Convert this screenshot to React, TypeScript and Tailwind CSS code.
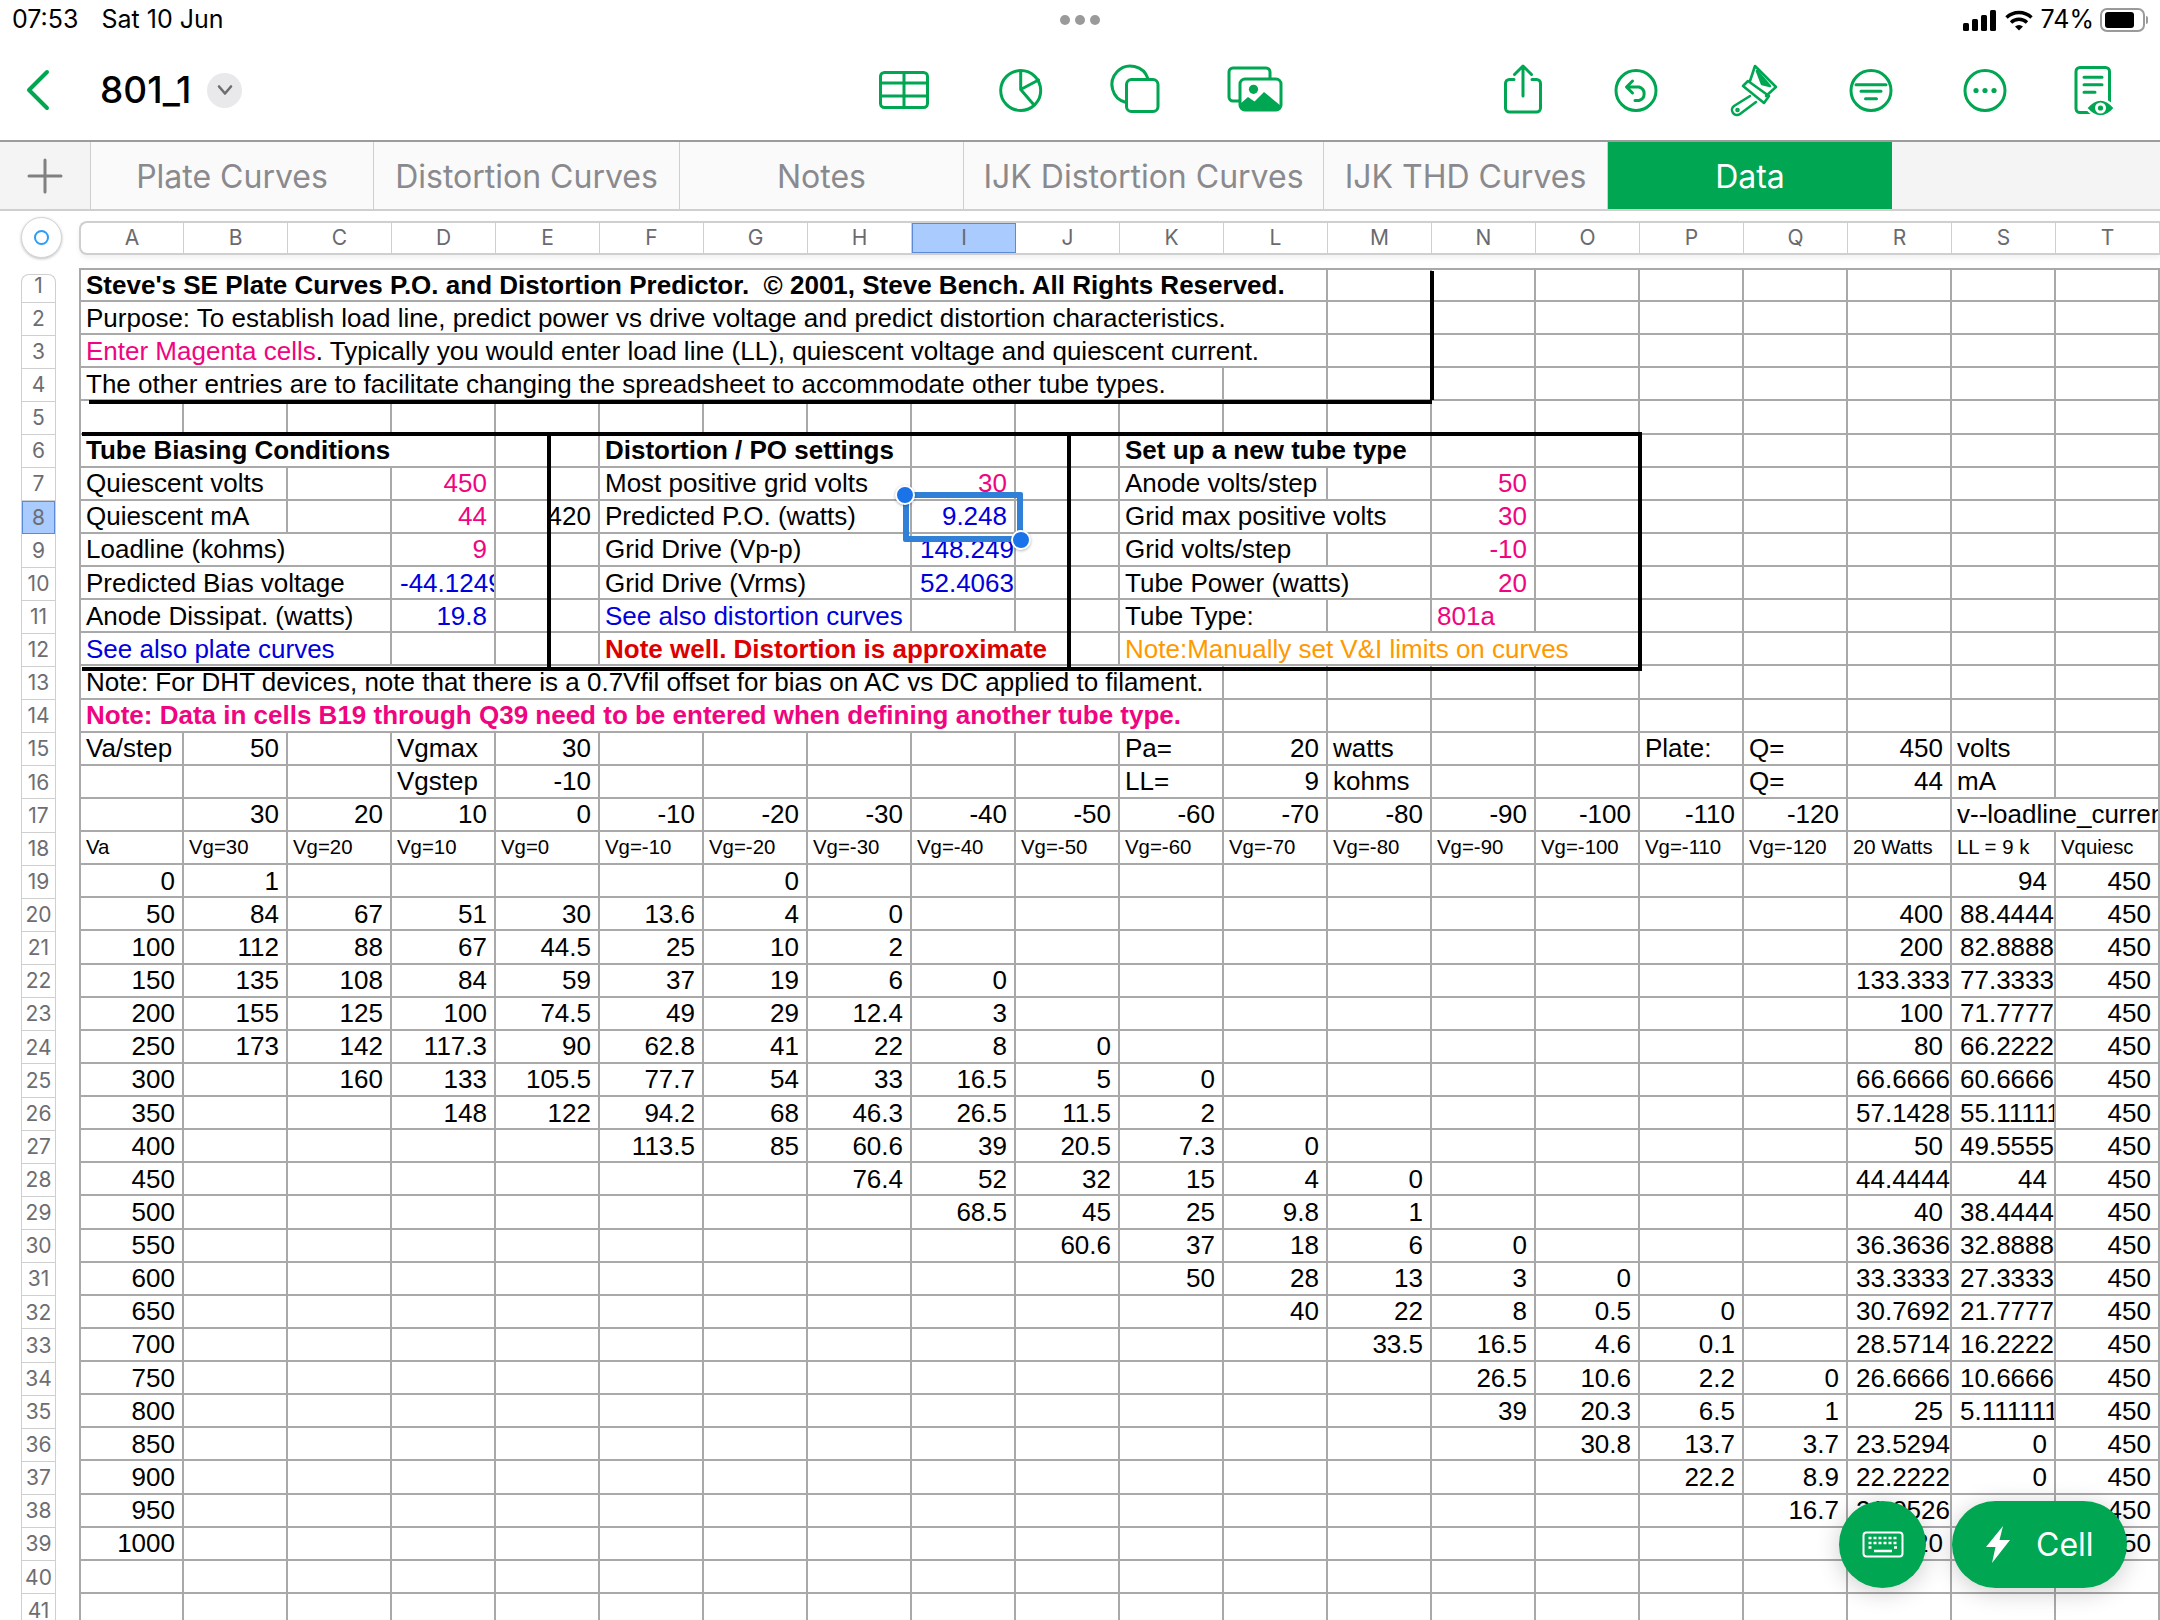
import React from 'react';

const MAGENTA = 'text-[#f0047f]';
const BLUE = 'text-[#0000dd]';
const RED = 'text-[#dd0000]';
const ORANGE = 'text-[#ff9900]';

const SPAN: Record<number, string> = {
  1: 'col-span-1',
  2: 'col-span-2',
  3: 'col-span-3',
  4: 'col-span-4',
  5: 'col-span-5',
  11: 'col-span-11',
  12: 'col-span-12',
};

type Cell = string | { t?: React.ReactNode; s?: number; c?: string; b?: boolean };

const TABS = [
  { label: 'Plate Curves', w: 'w-[283px]' },
  { label: 'Distortion Curves', w: 'w-[306px]' },
  { label: 'Notes', w: 'w-[284px]' },
  { label: 'IJK Distortion Curves', w: 'w-[360px]' },
  { label: 'IJK THD Curves', w: 'w-[284px]' },
];

const COLUMNS = 'ABCDEFGHIJKLMNOPQRST'.split('');

const blank = (n: number): Cell[] => Array.from({ length: n }, () => '');

const ROWS: Cell[][] = [
  [{ t: "Steve's SE Plate Curves P.O. and Distortion Predictor.  © 2001, Steve Bench. All Rights Reserved.", s: 12, b: true }, ...blank(8)],
  [{ t: 'Purpose: To establish load line, predict power vs drive voltage and predict distortion characteristics.', s: 12 }, ...blank(8)],
  [{ t: <><span className={MAGENTA}>Enter Magenta cells</span>. Typically you would enter load line (LL), quiescent voltage and quiescent current.</>, s: 12 }, ...blank(8)],
  [{ t: 'The other entries are to facilitate changing the spreadsheet to accommodate other tube types.', s: 11 }, ...blank(9)],
  blank(20),
  [{ t: 'Tube Biasing Conditions', s: 4, b: true }, '', { t: 'Distortion / PO settings', s: 3, b: true }, '', '', { t: 'Set up a new tube type', s: 3, b: true }, ...blank(7)],
  [{ t: 'Quiescent volts', s: 2 }, '', { t: '450', c: MAGENTA }, '', { t: 'Most positive grid volts', s: 3 }, { t: '30', c: MAGENTA }, '', { t: 'Anode volts/step', s: 2 }, '', { t: '50', c: MAGENTA }, ...blank(6)],
  [{ t: 'Quiescent mA', s: 2 }, '', { t: '44', c: MAGENTA }, '420', { t: 'Predicted P.O. (watts)', s: 3 }, { t: '9.248', c: BLUE }, '', { t: 'Grid max positive volts', s: 3 }, { t: '30', c: MAGENTA }, ...blank(6)],
  [{ t: 'Loadline (kohms)', s: 3 }, { t: '9', c: MAGENTA }, '', { t: 'Grid Drive (Vp-p)', s: 3 }, { t: '148.249', c: BLUE }, '', { t: 'Grid volts/step', s: 2 }, '', { t: '-10', c: MAGENTA }, ...blank(6)],
  [{ t: 'Predicted Bias voltage', s: 3 }, { t: '-44.12499', c: BLUE }, '', { t: 'Grid Drive (Vrms)', s: 3 }, { t: '52.4063', c: BLUE }, '', { t: 'Tube Power (watts)', s: 3 }, { t: '20', c: MAGENTA }, ...blank(6)],
  [{ t: 'Anode Dissipat. (watts)', s: 3 }, { t: '19.8', c: BLUE }, '', { t: 'See also distortion curves', s: 3, c: BLUE }, '', '', { t: 'Tube Type:', s: 2 }, '', { t: '801a', c: MAGENTA }, ...blank(6)],
  [{ t: 'See also plate curves', s: 3, c: BLUE }, '', '', { t: 'Note well. Distortion is approximate', s: 5, c: RED, b: true }, { t: 'Note:Manually set V&I limits on curves', s: 5, c: ORANGE }, ...blank(5)],
  [{ t: 'Note: For DHT devices, note that there is a 0.7Vfil offset for bias on AC vs DC applied to filament.', s: 11 }, ...blank(9)],
  [{ t: 'Note: Data in cells B19 through Q39 need to be entered when defining another tube type.', s: 11, c: MAGENTA, b: true }, ...blank(9)],
  ['Va/step', '50', '', 'Vgmax', '30', ...blank(5), 'Pa=', '20', 'watts', '', '', 'Plate:', 'Q=', '450', 'volts', ''],
  ['', '', '', 'Vgstep', '-10', ...blank(5), 'LL=', '9', 'kohms', '', '', '', 'Q=', '44', 'mA', ''],
  ['', '30', '20', '10', '0', '-10', '-20', '-30', '-40', '-50', '-60', '-70', '-80', '-90', '-100', '-110', '-120', '', { t: 'v--loadline_current', s: 2 }],
  ['Va', 'Vg=30', 'Vg=20', 'Vg=10', 'Vg=0', 'Vg=-10', 'Vg=-20', 'Vg=-30', 'Vg=-40', 'Vg=-50', 'Vg=-60', 'Vg=-70', 'Vg=-80', 'Vg=-90', 'Vg=-100', 'Vg=-110', 'Vg=-120', '20 Watts', 'LL = 9 k', 'Vquiesc'],
  ['0', '1', '', '', '', '', '0', ...blank(11), '94', '450'],
  ['50', '84', '67', '51', '30', '13.6', '4', '0', ...blank(9), '400', '88.4444', '450'],
  ['100', '112', '88', '67', '44.5', '25', '10', '2', ...blank(9), '200', '82.8888', '450'],
  ['150', '135', '108', '84', '59', '37', '19', '6', '0', ...blank(8), '133.333', '77.3333', '450'],
  ['200', '155', '125', '100', '74.5', '49', '29', '12.4', '3', ...blank(8), '100', '71.7777', '450'],
  ['250', '173', '142', '117.3', '90', '62.8', '41', '22', '8', '0', ...blank(7), '80', '66.2222', '450'],
  ['300', '', '160', '133', '105.5', '77.7', '54', '33', '16.5', '5', '0', ...blank(6), '66.6666', '60.6666', '450'],
  ['350', '', '', '148', '122', '94.2', '68', '46.3', '26.5', '11.5', '2', ...blank(6), '57.1428', '55.11111', '450'],
  ['400', '', '', '', '', '113.5', '85', '60.6', '39', '20.5', '7.3', '0', ...blank(5), '50', '49.5555', '450'],
  ['450', ...blank(6), '76.4', '52', '32', '15', '4', '0', ...blank(4), '44.4444', '44', '450'],
  ['500', ...blank(7), '68.5', '45', '25', '9.8', '1', ...blank(4), '40', '38.4444', '450'],
  ['550', ...blank(8), '60.6', '37', '18', '6', '0', ...blank(3), '36.3636', '32.8888', '450'],
  ['600', ...blank(9), '50', '28', '13', '3', '0', '', '', '33.3333', '27.3333', '450'],
  ['650', ...blank(10), '40', '22', '8', '0.5', '0', '', '30.7692', '21.7777', '450'],
  ['700', ...blank(11), '33.5', '16.5', '4.6', '0.1', '', '28.5714', '16.2222', '450'],
  ['750', ...blank(12), '26.5', '10.6', '2.2', '0', '26.6666', '10.6666', '450'],
  ['800', ...blank(12), '39', '20.3', '6.5', '1', '25', '5.111111', '450'],
  ['850', ...blank(13), '30.8', '13.7', '3.7', '23.5294', '0', '450'],
  ['900', ...blank(14), '22.2', '8.9', '22.2222', '0', '450'],
  ['950', ...blank(15), '16.7', '21.0526', '0', '450'],
  ['1000', ...blank(16), '20', '0', '450'],
  blank(20),
  blank(20),
];

function GridCell({ cell, small }: { cell: Cell; small: boolean }) {
  const c = typeof cell === 'string' ? { t: cell } : cell;
  const text = typeof c.t === 'string' ? c.t : '';
  const numeric = /^-?[\d.]+$/.test(text);
  const long = numeric && text.length >= 7;
  const right = numeric && !long;
  return (
    <div
      className={`${SPAN[c.s ?? 1]} flex items-center overflow-hidden whitespace-pre border-r-2 border-b-2 border-[#a9a9a9] leading-none ${
        right ? 'justify-end pr-[7px]' : long ? 'pl-[8px]' : 'pl-[5px]'
      } ${small ? 'text-[20.4px]' : 'text-[26px]'} ${c.b ? 'font-bold' : ''} ${c.c ?? 'text-black'}`}
    >
      {c.t}
    </div>
  );
}

function Stroke({ children }: { children: React.ReactNode }) {
  return (
    <svg width="60" height="60" viewBox="0 0 60 60" fill="none" stroke="#00a651" strokeWidth="3" strokeLinecap="round" strokeLinejoin="round" className="shrink-0">
      {children}
    </svg>
  );
}

function StatusBar() {
  return (
    <div className="grid h-[40px] grid-cols-3 items-center font-['Inter',sans-serif] text-[25px] text-black">
      <div className="flex gap-[23px] pl-[12px]">
        <span>07:53</span>
        <span>Sat 10 Jun</span>
      </div>
      <div className="flex justify-center gap-[5px]">
        <span className="h-[10px] w-[10px] rounded-full bg-[#9a9a9a]" />
        <span className="h-[10px] w-[10px] rounded-full bg-[#9a9a9a]" />
        <span className="h-[10px] w-[10px] rounded-full bg-[#9a9a9a]" />
      </div>
      <div className="flex items-center justify-end pr-[12px]">
        <svg width="34" height="21" viewBox="0 0 34 21" fill="#000">
          <rect x="0" y="13" width="6" height="8" rx="1.5" />
          <rect x="9" y="9" width="6" height="12" rx="1.5" />
          <rect x="18" y="5" width="6" height="16" rx="1.5" />
          <rect x="27" y="0" width="6" height="21" rx="1.5" />
        </svg>
        <svg width="28" height="21" viewBox="0 0 28 21" fill="none" stroke="#000" strokeWidth="3.4" className="ml-[8px]">
          <path d="M1.5 7.5a18 18 0 0 1 25 0" />
          <path d="M6 12.5a11.5 11.5 0 0 1 16 0" />
          <path d="M14 20.5l-4-4a6 6 0 0 1 8 0z" fill="#000" stroke="none" />
        </svg>
        <span className="ml-[8px]">74%</span>
        <div className="ml-[6px] flex h-[24px] w-[45px] items-center rounded-[7px] border-2 border-[#9a9a9a] px-[3px]">
          <div className="h-[16px] w-[29px] rounded-[3px] bg-black" />
        </div>
        <div className="ml-[1px] h-[8px] w-[2px] rounded-r-full bg-[#9a9a9a]" />
      </div>
    </div>
  );
}

function NavBar() {
  return (
    <div className="flex h-[100px] items-center">
      <div className="flex w-[874px] shrink-0 items-center">
        <svg width="30" height="44" viewBox="0 0 30 44" fill="none" stroke="#00a651" strokeWidth="4" strokeLinecap="round" strokeLinejoin="round" className="ml-[23px]">
          <path d="M24 4L6 22l18 18" />
        </svg>
        <span className="ml-[47px] font-['Inter',sans-serif] text-[37px] font-medium text-black">801_1</span>
        <div className="ml-[16px] flex h-[35px] w-[35px] items-center justify-center rounded-full bg-[#e9e9eb]">
          <svg width="18" height="12" viewBox="0 0 18 12" fill="none" stroke="#6d6d72" strokeWidth="2.6" strokeLinecap="round" strokeLinejoin="round">
            <path d="M3 2.5l6 7 6-7" />
          </svg>
        </div>
      </div>

      {/* table */}
      <Stroke>
        <rect x="6.5" y="12.5" width="47" height="35" rx="4" />
        <path d="M6.5 23h47M6.5 36h47M30 12.5v35" strokeLinecap="butt" />
      </Stroke>
      {/* chart */}
      <div className="ml-[56px]">
        <Stroke>
          <circle cx="30.7" cy="30.5" r="20" />
          <path d="M30.7 11v18.5L48.5 20M30.7 29.5L44 45" />
        </Stroke>
      </div>
      {/* shapes */}
      <div className="ml-[55px]">
        <Stroke>
          <path d="M43 18.7A18.5 18.5 0 1 0 20.4 42.3" />
          <rect x="21.5" y="19.5" width="31.5" height="32" rx="5" />
        </Stroke>
      </div>
      {/* media */}
      <div className="ml-[60px]">
        <Stroke>
          <path d="M14 41H8a4 4 0 0 1-4-4V12a4 4 0 0 1 4-4h33a4 4 0 0 1 4 4v6" />
          <rect x="15" y="19" width="41" height="31" rx="5" />
          <circle cx="28.5" cy="29.3" r="4.6" fill="#00a651" stroke="none" />
          <path d="M15 44l8-7 6.5 4.5L39 32l17 14a5 5 0 0 1-5 4.5H20a5 5 0 0 1-5-5z" fill="#00a651" stroke="none" />
        </Stroke>
      </div>
      {/* share */}
      <div className="ml-[208px]">
        <Stroke>
          <path d="M21 19.5h-4.5a4 4 0 0 0-4 4v24.5a4 4 0 0 0 4 4h27a4 4 0 0 0 4-4V23.5a4 4 0 0 0-4-4H39" />
          <path d="M30 6.5V36M21.5 14.5L30 6l8.5 8.5" />
        </Stroke>
      </div>
      {/* undo */}
      <div className="ml-[53px]">
        <Stroke>
          <circle cx="30" cy="30.5" r="20" />
          <path d="M21 27h12a7 7 0 0 1 0 13.5h-4M26.5 21l-6 6 6 6" />
        </Stroke>
      </div>
      {/* format brush */}
      <div className="ml-[59px]">
        <svg width="60" height="60" viewBox="0 0 60 60" fill="none" stroke="#00a651" strokeWidth="2.6" strokeLinecap="round" strokeLinejoin="round" className="shrink-0">
          <path d="M25 21L30 6l21 21-10 9" />
          <path d="M18 26l5-5 21 15-5 7z" />
          <path d="M25 36L9 46a5 5 0 0 0 6 8l16-12" />
          <path d="M32 11l13 15-8-2z" fill="#00a651" />
          <circle cx="12.5" cy="50" r="1" />
        </svg>
      </div>
      {/* organise */}
      <div className="ml-[56px]">
        <Stroke>
          <circle cx="30" cy="30.5" r="20" />
          <path d="M15 24.7h30M20 31.3h20M24.5 38.7h11" />
        </Stroke>
      </div>
      {/* more */}
      <div className="ml-[54px]">
        <Stroke>
          <circle cx="30" cy="30.5" r="20" />
          <circle cx="21" cy="30.5" r="2.6" fill="#00a651" stroke="none" />
          <circle cx="30" cy="30.5" r="2.6" fill="#00a651" stroke="none" />
          <circle cx="39" cy="30.5" r="2.6" fill="#00a651" stroke="none" />
        </Stroke>
      </div>
      {/* reading view */}
      <div className="ml-[50px]">
        <Stroke>
          <rect x="11" y="7.5" width="33.5" height="45" rx="4" />
          <path d="M19 17.3h18M19 24.7h18M19 32.3h11" />
          <path d="M21 48Q35.5 31 50 48 35.5 65 21 48z" fill="#00a651" stroke="#fff" strokeWidth="2.5" />
          <circle cx="35.5" cy="48" r="5.5" fill="#fff" stroke="none" />
          <circle cx="35.5" cy="48" r="2.6" fill="#00a651" stroke="none" />
        </Stroke>
      </div>
    </div>
  );
}

function TabBar() {
  return (
    <div className="flex h-[71px] border-t-2 border-b-2 border-t-[#9c9c9c] border-b-[#cfcfcf] bg-[#f4f4f4] font-['Inter',sans-serif] text-[32px] text-[#8a8a8e]">
      <div className="flex w-[91px] shrink-0 items-center justify-center border-r border-[#cfcfcf]">
        <svg width="36" height="36" viewBox="0 0 36 36" stroke="#808080" strokeWidth="3" strokeLinecap="round">
          <path d="M18 2v32M2 18h32" />
        </svg>
      </div>
      {TABS.map((tab) => (
        <div key={tab.label} className={`${tab.w} flex shrink-0 items-center justify-center whitespace-nowrap border-r border-[#cfcfcf] bg-[#fafafa] pt-[2px]`}>
          {tab.label}
        </div>
      ))}
      <div className="flex w-[284px] shrink-0 items-center justify-center bg-[#00a651] pt-[2px] text-white">Data</div>
    </div>
  );
}

function ColumnHeader() {
  return (
    <div className="flex h-[57px] items-start">
      <div className="ml-[21px] mt-[6px] flex h-[41px] w-[41px] shrink-0 items-center justify-center rounded-full border border-[#d4d4d4] bg-white shadow-[0_1px_3px_rgba(0,0,0,0.25)]">
        <div className="h-[15px] w-[15px] rounded-full border-[2.5px] border-[#2f9bf4]" />
      </div>
      <div className="ml-[17px] mt-[10px] flex h-[34px] w-[2081px] shrink-0 rounded-l-[8px] border-y-2 border-l-2 border-[#cfcfcf] bg-white font-['Inter',sans-serif] text-[21px] text-[#69696e] shadow-[0_3px_5px_rgba(0,0,0,0.06)]">
        {COLUMNS.map((col) => (
          <div
            key={col}
            className={`flex shrink-0 items-center justify-center ${col === 'A' ? 'w-[103px]' : 'w-[104px]'} ${
              col === 'I' ? 'border border-[#5b8bd8] bg-[#a9cbfd]' : 'border-r border-[#cfcfcf]'
            }`}
          >
            {col}
          </div>
        ))}
      </div>
    </div>
  );
}

function RowRail() {
  return (
    <div className="ml-[21px] mt-[6px] w-[35px] shrink-0 rounded-t-[8px] border-x border-t border-[#cfcfcf] bg-white font-['Inter',sans-serif] text-[21px] text-[#6d6d72]">
      {ROWS.map((_, i) => (
        <div
          key={i}
          className={`flex items-center justify-center border-b ${i === 0 ? 'h-[27.5px] pb-[6px]' : 'h-[33.13px]'} ${
            i === 7 ? 'border border-[#5b8bd8] bg-[#a9cbfd]' : 'border-[#cfcfcf]'
          }`}
        >
          {i + 1}
        </div>
      ))}
    </div>
  );
}

export default function App() {
  return (
    <div className="relative h-[1620px] w-[2160px] overflow-hidden bg-white">
      <StatusBar />
      <NavBar />
      <TabBar />
      <ColumnHeader />

      <div className="flex h-[1352px] items-start overflow-hidden">
        <RowRail />
        <div className="ml-[23px] grid w-[2081px] shrink-0 grid-cols-[103px_repeat(19,104px)] grid-rows-[32px] auto-rows-[33.13px] border-t-2 border-l-2 border-[#a9a9a9] font-['Liberation_Sans',sans-serif]">
          {ROWS.flatMap((row, r) =>
            row.map((cell, c) => <GridCell key={`${r}-${c}`} cell={cell} small={r === 17} />),
          )}
        </div>
      </div>

      {/* heavy borders drawn over the sheet */}
      <div className="absolute left-[1430px] top-[271px] h-[129px] w-[4px] bg-black" />
      <div className="absolute left-[89px] top-[400px] h-[4px] w-[1343px] bg-black" />
      <div className="absolute left-[82px] top-[432px] h-[4px] w-[1560px] bg-black" />
      <div className="absolute left-[82px] top-[667px] h-[4px] w-[1560px] bg-black" />
      <div className="absolute left-[547px] top-[432px] h-[238px] w-[4px] bg-black" />
      <div className="absolute left-[1067px] top-[432px] h-[238px] w-[4px] bg-black" />
      <div className="absolute left-[1638px] top-[432px] h-[238px] w-[4px] bg-black" />

      {/* selected cell I8 */}
      <div className="absolute left-[903px] top-[492px] h-[50px] w-[120px] rounded-[2px] border-[6px] border-[#2f80d6]" />
      <div className="absolute left-[895px] top-[485px] h-[20px] w-[20px] rounded-full border-2 border-white bg-[#1a73e8] shadow-[0_1px_3px_rgba(0,0,0,0.3)]" />
      <div className="absolute left-[1011px] top-[530px] h-[20px] w-[20px] rounded-full border-2 border-white bg-[#1a73e8] shadow-[0_1px_3px_rgba(0,0,0,0.3)]" />

      {/* floating keyboard and cell buttons */}
      <div className="absolute left-[1839px] top-[1501px] flex h-[87px] w-[87px] items-center justify-center rounded-full bg-[#00a651] shadow-[0_4px_24px_rgba(0,0,0,0.2)]">
        <svg width="42" height="27" viewBox="0 0 42 27" fill="none" stroke="#fff" strokeWidth="2">
          <rect x="1.5" y="1.5" width="39" height="24" rx="3" />
          <path d="M6.5 7h3M11.5 7h3M16.5 7h3M21.5 7h3M26.5 7h3M31.5 7h3M6.5 12h3M11.5 12h3M16.5 12h3M21.5 12h3M26.5 12h3M31.5 12h3M6.5 16.5h3M32 16.5h3M12 20h18" strokeWidth="2.4" />
        </svg>
      </div>
      <div className="absolute left-[1952px] top-[1501px] flex h-[87px] w-[175px] items-center rounded-full bg-[#00a651] pl-[34px] font-['Inter',sans-serif] text-[32px] text-white shadow-[0_4px_24px_rgba(0,0,0,0.2)]">
        <svg width="24" height="37" viewBox="0 0 24 37" fill="#fff">
          <path d="M17 0L0 21h9.5L6 37 24 14H13.5z" />
        </svg>
        <span className="ml-[26px]">Cell</span>
      </div>
    </div>
  );
}
